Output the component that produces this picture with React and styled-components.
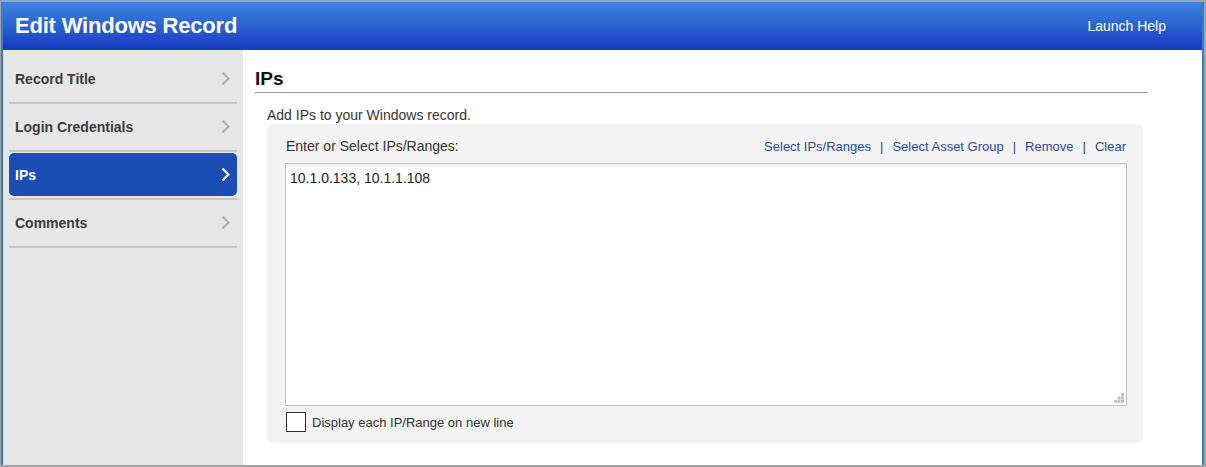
import { createGlobalStyle, styled } from "styled-components";

const GlobalStyle = createGlobalStyle`
  html, body {
    margin: 0;
    padding: 0;
    background: #ffffff;
  }
  * {
    box-sizing: border-box;
  }
`;

const navItems = [
  { label: "Record Title" },
  { label: "Login Credentials" },
  { label: "IPs", active: true },
  { label: "Comments" },
];

const links = ["Select IPs/Ranges", "Select Asset Group", "Remove", "Clear"];

const Chevron = ({ active }) => (
  <svg width="9" height="15" viewBox="0 0 9 15">
    <polyline
      points="1.5,1.5 7.5,7.5 1.5,13.5"
      fill="none"
      stroke={active ? "#ffffff" : "#b3b3b3"}
      strokeWidth="2.2"
    />
  </svg>
);

const Grip = () => (
  <svg width="10" height="10" viewBox="0 0 10 10">
    <rect x="7" y="0" width="3" height="3" fill="#c2c2c2" />
    <rect x="3.5" y="3.5" width="3" height="3" fill="#c2c2c2" />
    <rect x="7" y="3.5" width="3" height="3" fill="#c2c2c2" />
    <rect x="0" y="7" width="3" height="3" fill="#c2c2c2" />
    <rect x="3.5" y="7" width="3" height="3" fill="#c2c2c2" />
    <rect x="7" y="7" width="3" height="3" fill="#c2c2c2" />
  </svg>
);

const App = () => {
  return (
    <>
      <GlobalStyle />
      <Frame>
        <Inner>
          <Header>
            <Title>Edit Windows Record</Title>
            <HelpLink>Launch Help</HelpLink>
          </Header>
          <Body>
            <Sidebar>
              {navItems.map((item) => (
                <NavItem key={item.label}>
                  <NavLink $active={item.active}>
                    <span>{item.label}</span>
                    <Chevron active={item.active} />
                  </NavLink>
                </NavItem>
              ))}
            </Sidebar>
            <Content>
              <Heading>IPs</Heading>
              <Intro>Add IPs to your Windows record.</Intro>
              <Panel>
                <PanelRow>
                  <Label>Enter or Select IPs/Ranges:</Label>
                  <Links>
                    {links.map((l, i) => (
                      <span key={l}>
                        {i > 0 && <Sep>|</Sep>}
                        <ActionLink>{l}</ActionLink>
                      </span>
                    ))}
                  </Links>
                </PanelRow>
                <AreaWrap>
                  <TextArea defaultValue="10.1.0.133, 10.1.1.108" />
                  <GripBox>
                    <Grip />
                  </GripBox>
                </AreaWrap>
                <CheckRow>
                  <CheckBox />
                  <CheckLabel>Display each IP/Range on new line</CheckLabel>
                </CheckRow>
              </Panel>
            </Content>
          </Body>
        </Inner>
      </Frame>
    </>
  );
};

export default App;

const Frame = styled.div`
  width: 1206px;
  height: 467px;
  border: 2px solid #a4a4a4;
  border-left-width: 1px;
  font-family: "Liberation Sans", Arial, sans-serif;
`;

const Inner = styled.div`
  height: 100%;
  display: flex;
  flex-direction: column;
  border-left: 2px solid #2b7fd8;
  border-right: 2px solid #2b7fd8;
`;

const Header = styled.div`
  height: 48px;
  flex-shrink: 0;
  display: flex;
  align-items: center;
  justify-content: space-between;
  padding: 0 36px 0 12px;
  background: linear-gradient(to bottom, #3a84da 0%, #2a62d0 50%, #1838c2 100%);
  color: #ffffff;
`;

const Title = styled.h1`
  margin: 0;
  font-size: 22px;
  font-weight: bold;
  letter-spacing: -0.2px;
`;

const HelpLink = styled.span`
  font-size: 14px;
  margin-top: -1px;
`;

const Body = styled.div`
  flex: 1;
  display: flex;
  min-height: 0;
`;

const Sidebar = styled.div`
  width: 240px;
  flex-shrink: 0;
  background: #e6e6e6;
  padding: 6px 6px 0;
`;

const NavItem = styled.div`
  height: 48px;
  padding: 1px 0 2px;
  border-bottom: 2px solid #c6c6c6;
`;

const NavLink = styled.div`
  height: 43px;
  display: flex;
  align-items: center;
  justify-content: space-between;
  padding: 0 7px 0 6px;
  border-radius: 5px;
  font-size: 14px;
  font-weight: bold;
  color: ${(p) => (p.$active ? "#ffffff" : "#3b3b3b")};
  background: ${(p) => (p.$active ? "#1b4db4" : "transparent")};
`;

const Content = styled.div`
  flex: 1;
  background: #ffffff;
  padding: 18px 54px 0 12px;
`;

const Heading = styled.h2`
  margin: 0;
  font-size: 19px;
  line-height: 22px;
  font-weight: bold;
  color: #111111;
  padding-bottom: 2px;
  border-bottom: 1px solid #9a9a9a;
`;

const Intro = styled.p`
  margin: 13px 0 0 12px;
  font-size: 14px;
  line-height: 18px;
  color: #333333;
`;

const Panel = styled.div`
  margin: 0 5px 0 12px;
  background: #f3f3f3;
  border-radius: 6px;
  padding: 12px 16px 11px 18px;
`;

const PanelRow = styled.div`
  display: flex;
  justify-content: space-between;
  align-items: center;
  height: 20px;
  margin-bottom: 7px;
  padding: 0 1px;
`;

const Label = styled.span`
  font-size: 14px;
  color: #333333;
`;

const Links = styled.div`
  font-size: 13px;
  color: #2c4a9c;
`;

const ActionLink = styled.span`
  color: #2c4a9c;
  cursor: pointer;
`;

const Sep = styled.span`
  margin: 0 9px;
  color: #2c4a9c;
`;

const AreaWrap = styled.div`
  position: relative;
  height: 243px;
`;

const TextArea = styled.textarea`
  display: block;
  width: 100%;
  height: 100%;
  resize: none;
  border: 1px solid #c3c3c3;
  box-shadow: inset 0 2px 3px rgba(0, 0, 0, 0.08);
  padding: 6px 4px;
  font-family: "Liberation Sans", Arial, sans-serif;
  font-size: 14px;
  color: #222222;
  background: #ffffff;
  outline: none;
`;

const GripBox = styled.div`
  position: absolute;
  right: 3px;
  bottom: 3px;
  line-height: 0;
`;

const CheckRow = styled.div`
  display: flex;
  align-items: center;
  margin-top: 6px;
  padding-left: 1px;
`;

const CheckBox = styled.span`
  width: 20px;
  height: 20px;
  border: 1px solid #333333;
  background: #ffffff;
  margin-right: 6px;
`;

const CheckLabel = styled.span`
  font-size: 13px;
  color: #333333;
`;
